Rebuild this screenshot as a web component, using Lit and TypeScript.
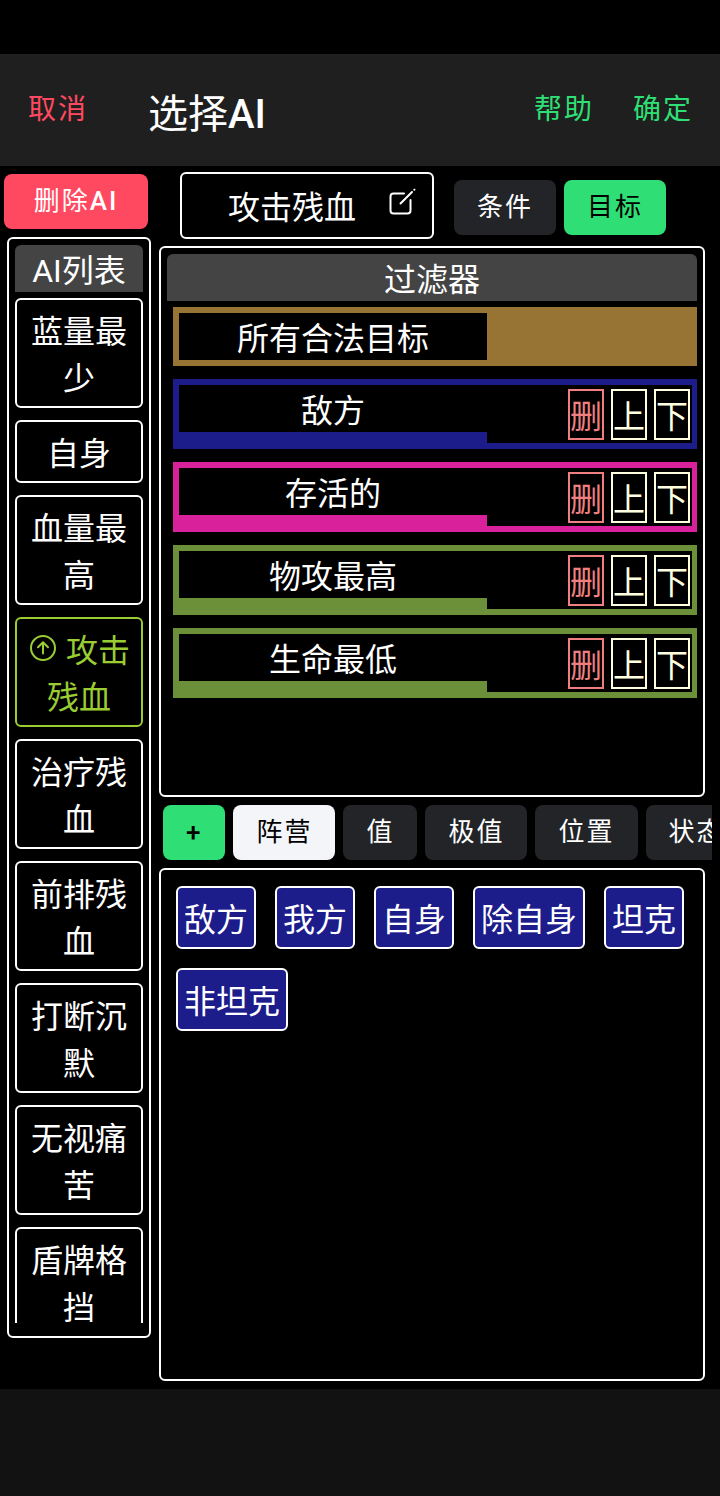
import { LitElement, html, css, nothing } from "lit";
import { customElement, state } from "lit/decorators.js";
import { classMap } from "lit/directives/class-map.js";

interface FilterRow {
  name: string;
  tone: string;
  fixed?: boolean;
}

@customElement("app-root")
export class AppRoot extends LitElement {
  @state() private selectedAi = "攻击残血";
  @state() private category = "阵营";
  @state() private mode = "目标";

  private aiList = ["蓝量最少", "自身", "血量最高", "攻击残血", "治疗残血", "前排残血", "打断沉默", "无视痛苦", "盾牌格挡"];
  private categories = ["阵营", "值", "极值", "位置", "状态"];
  private options = ["敌方", "我方", "自身", "除自身", "坦克", "非坦克"];
  private filters: FilterRow[] = [
    { name: "所有合法目标", tone: "base", fixed: true },
    { name: "敌方", tone: "camp" },
    { name: "存活的", tone: "status" },
    { name: "物攻最高", tone: "extreme" },
    { name: "生命最低", tone: "extreme" },
  ];

  static styles = css`
    :host {
      display: flex;
      flex-direction: column;
      height: 100vh;
      box-sizing: border-box;
      padding-top: 54px;
      background: #000;
      color: #fff;
      font-family: "Noto Sans CJK SC", sans-serif;
      font-size: 32px;
      line-height: 47px;
    }
    * {
      box-sizing: border-box;
    }
    button {
      margin: 0;
      padding: 0;
      border: 0;
      background: none;
      color: inherit;
      font: inherit;
      cursor: pointer;
    }
    .latin {
      font-family: Roboto, sans-serif;
      line-height: 1;
    }
    .strong {
      font-weight: 500;
    }
    .header {
      flex: none;
      display: flex;
      align-items: center;
      height: 112px;
      padding: 0 27px 0 28px;
      background: #1f1f1f;
      font-family: Roboto, "Noto Sans CJK SC", sans-serif;
    }
    .header-action {
      padding-bottom: 2px;
      font-size: 28px;
      letter-spacing: 2px;
      color: #2fdf75;
    }
    .header-actions {
      display: flex;
      gap: 39px;
    }
    .cancel {
      color: #ff4961;
    }
    .title {
      flex: 1;
      margin: 0;
      padding: 8px 0 0 60px;
      font-size: 40px;
      font-weight: 400;
    }
    .main {
      flex: 1;
      min-height: 0;
      display: grid;
      grid-template-columns: 151px minmax(0, 1fr);
      column-gap: 8px;
      padding: 8px 8px 8px 0;
    }
    .side {
      display: flex;
      flex-direction: column;
      gap: 8px;
      min-height: 0;
      padding-bottom: 43px;
    }
    .solid {
      flex: none;
      height: 55px;
      padding: 0 23px;
      border-radius: 8px;
      background: #222428;
      color: #fff;
      font-family: Roboto, "Noto Sans CJK SC", sans-serif;
      font-size: 26px;
      letter-spacing: 2px;
      white-space: nowrap;
    }
    .solid.danger {
      margin: 0 3px 0 4px;
      background: #ff4961;
    }
    .solid.success {
      background: #2fdf75;
      color: #000;
    }
    .solid.light {
      background: #f4f5f8;
      color: #000;
    }
    .panel {
      border: 2px solid #fff;
      border-radius: 6px;
      min-height: 0;
    }
    .ai-panel {
      flex: 1;
      margin-left: 7px;
      padding: 6px 6px 13px;
      display: flex;
    }
    .ai-list {
      flex: 1;
      display: flex;
      flex-direction: column;
      gap: 12px;
      overflow-y: auto;
      scrollbar-width: none;
    }
    .heading {
      flex: none;
      margin: 0;
      border-radius: 6px 6px 0 0;
      background: #444;
      font-size: 32px;
      font-weight: 400;
      text-align: center;
    }
    .ai-list .heading {
      margin-bottom: -6px;
    }
    .ai-item {
      flex: none;
      padding: 6px 12px;
      border: 2px solid #fff;
      border-radius: 6px;
      text-align: center;
    }
    .ai-item.selected {
      padding: 6px 8px;
      border-color: #9acd32;
      color: #9acd32;
    }
    .up-icon {
      width: 28px;
      height: 28px;
      margin-right: 10px;
    }
    .content {
      display: flex;
      flex-direction: column;
      min-height: 0;
    }
    .toolbar {
      display: flex;
      align-items: center;
      gap: 8px;
      height: 67px;
      margin: -2px 0 7px 21px;
    }
    .toolbar .solid {
      margin-top: 4px;
    }
    .name {
      display: flex;
      align-items: center;
      justify-content: flex-end;
      gap: 31px;
      width: 254px;
      height: 67px;
      margin-right: 12px;
      padding: 0 15px;
      border: 2px solid #fff;
      border-radius: 6px;
    }
    .edit-icon {
      width: 30px;
      height: 30px;
      margin-bottom: 6px;
    }
    .filter-panel {
      flex: 28 1 0;
      margin-right: 7px;
      padding: 6px;
      overflow: hidden;
    }
    .filters {
      display: flex;
      flex-direction: column;
      gap: 13px;
      margin: 6px 0 0;
      padding: 0 0 0 6px;
      list-style: none;
    }
    .filter {
      display: grid;
      grid-template-columns: 3fr 2fr;
      align-items: start;
      padding: 6px 5px 6px 6px;
    }
    .base {
      background: #977433;
    }
    .camp {
      background: #1c1c8b;
    }
    .status {
      background: #d8219b;
    }
    .extreme {
      background: #6b9039;
    }
    .filter-name {
      background: #000;
      text-align: center;
    }
    .filter-tools {
      display: flex;
      justify-content: flex-end;
      gap: 7px;
      padding: 4px 2px 3px;
      background: #000;
    }
    .tool {
      height: 51px;
      border: 2px solid #ffffe0;
      color: #ffffe0;
    }
    .tool.remove {
      border-color: #f08080;
      color: #f08080;
    }
    .tabs {
      flex: none;
      display: flex;
      gap: 8px;
      padding: 8px 0 8px 4px;
      overflow-x: auto;
      scrollbar-width: none;
    }
    .options-panel {
      flex: 25 1 0;
      display: flex;
      flex-wrap: wrap;
      align-content: flex-start;
      gap: 19px;
      margin-right: 7px;
      padding: 16px 15px;
      overflow: hidden;
    }
    .option {
      height: 63px;
      padding: 0 6px;
      border: 2px solid #fff;
      border-radius: 6px;
      background: #1c1c8b;
    }
    .footer {
      flex: none;
      height: 107px;
      background: #121212;
    }
  `;

  private renderFilter(row: FilterRow) {
    return html`
      <li class="filter ${row.tone}">
        <span class="filter-name">${row.name}</span>
        ${row.fixed
          ? nothing
          : html`<div class="filter-tools">
              <button class="tool remove">删</button>
              <button class="tool">上</button>
              <button class="tool">下</button>
            </div>`}
      </li>
    `;
  }

  private renderAi(name: string) {
    const selected = name === this.selectedAi;
    return html`<button
      class=${classMap({ "ai-item": true, selected })}
      @click=${() => (this.selectedAi = name)}
    >${selected
        ? html`<svg class="up-icon" viewBox="0 0 28 28" fill="none" stroke="currentColor" stroke-width="2" stroke-linecap="round" stroke-linejoin="round" aria-hidden="true">
            <circle cx="15" cy="14" r="12" />
            <path d="M10 13.2 15 8.2l5 5M15 8.6v11" />
          </svg>`
        : nothing}${name}</button>`;
  }

  render() {
    return html`
      <header class="header">
        <button class="header-action cancel">取消</button>
        <h1 class="title">选择<span class="latin strong">AI</span></h1>
        <div class="header-actions">
          <button class="header-action">帮助</button>
          <button class="header-action">确定</button>
        </div>
      </header>
      <main class="main">
        <aside class="side">
          <button class="solid danger">删除<span class="latin strong">AI</span></button>
          <div class="panel ai-panel">
            <div class="ai-list">
              <h2 class="heading"><span class="latin">AI</span>列表</h2>
              ${this.aiList.map((name) => this.renderAi(name))}
            </div>
          </div>
        </aside>
        <section class="content">
          <div class="toolbar">
            <button class="name">
              <span>${this.selectedAi}</span>
              <svg class="edit-icon" viewBox="0 0 30 30" fill="none" stroke="currentColor" stroke-width="2" stroke-linecap="round" stroke-linejoin="round" aria-hidden="true">
                <path d="M17 5.5H6.5a3 3 0 0 0-3 3v14a3 3 0 0 0 3 3h14a3 3 0 0 0 3-3V12" />
                <path d="M13.5 15.5 25 4M27.3 1.8l.2-.2" />
              </svg>
            </button>
            ${["条件", "目标"].map(
              (mode) => html`<button
                class=${classMap({ solid: true, success: mode === this.mode })}
                @click=${() => (this.mode = mode)}
              >${mode}</button>`
            )}
          </div>
          <div class="panel filter-panel">
            <h2 class="heading">过滤器</h2>
            <ul class="filters">
              ${this.filters.map((row) => this.renderFilter(row))}
            </ul>
          </div>
          <nav class="tabs">
            <button class="solid success"><span class="latin strong">+</span></button>
            ${this.categories.map(
              (name) => html`<button
                class=${classMap({ solid: true, light: name === this.category })}
                @click=${() => (this.category = name)}
              >${name}</button>`
            )}
          </nav>
          <div class="panel options-panel">
            ${this.options.map((name) => html`<button class="option">${name}</button>`)}
          </div>
        </section>
      </main>
      <footer class="footer"></footer>
    `;
  }
}
